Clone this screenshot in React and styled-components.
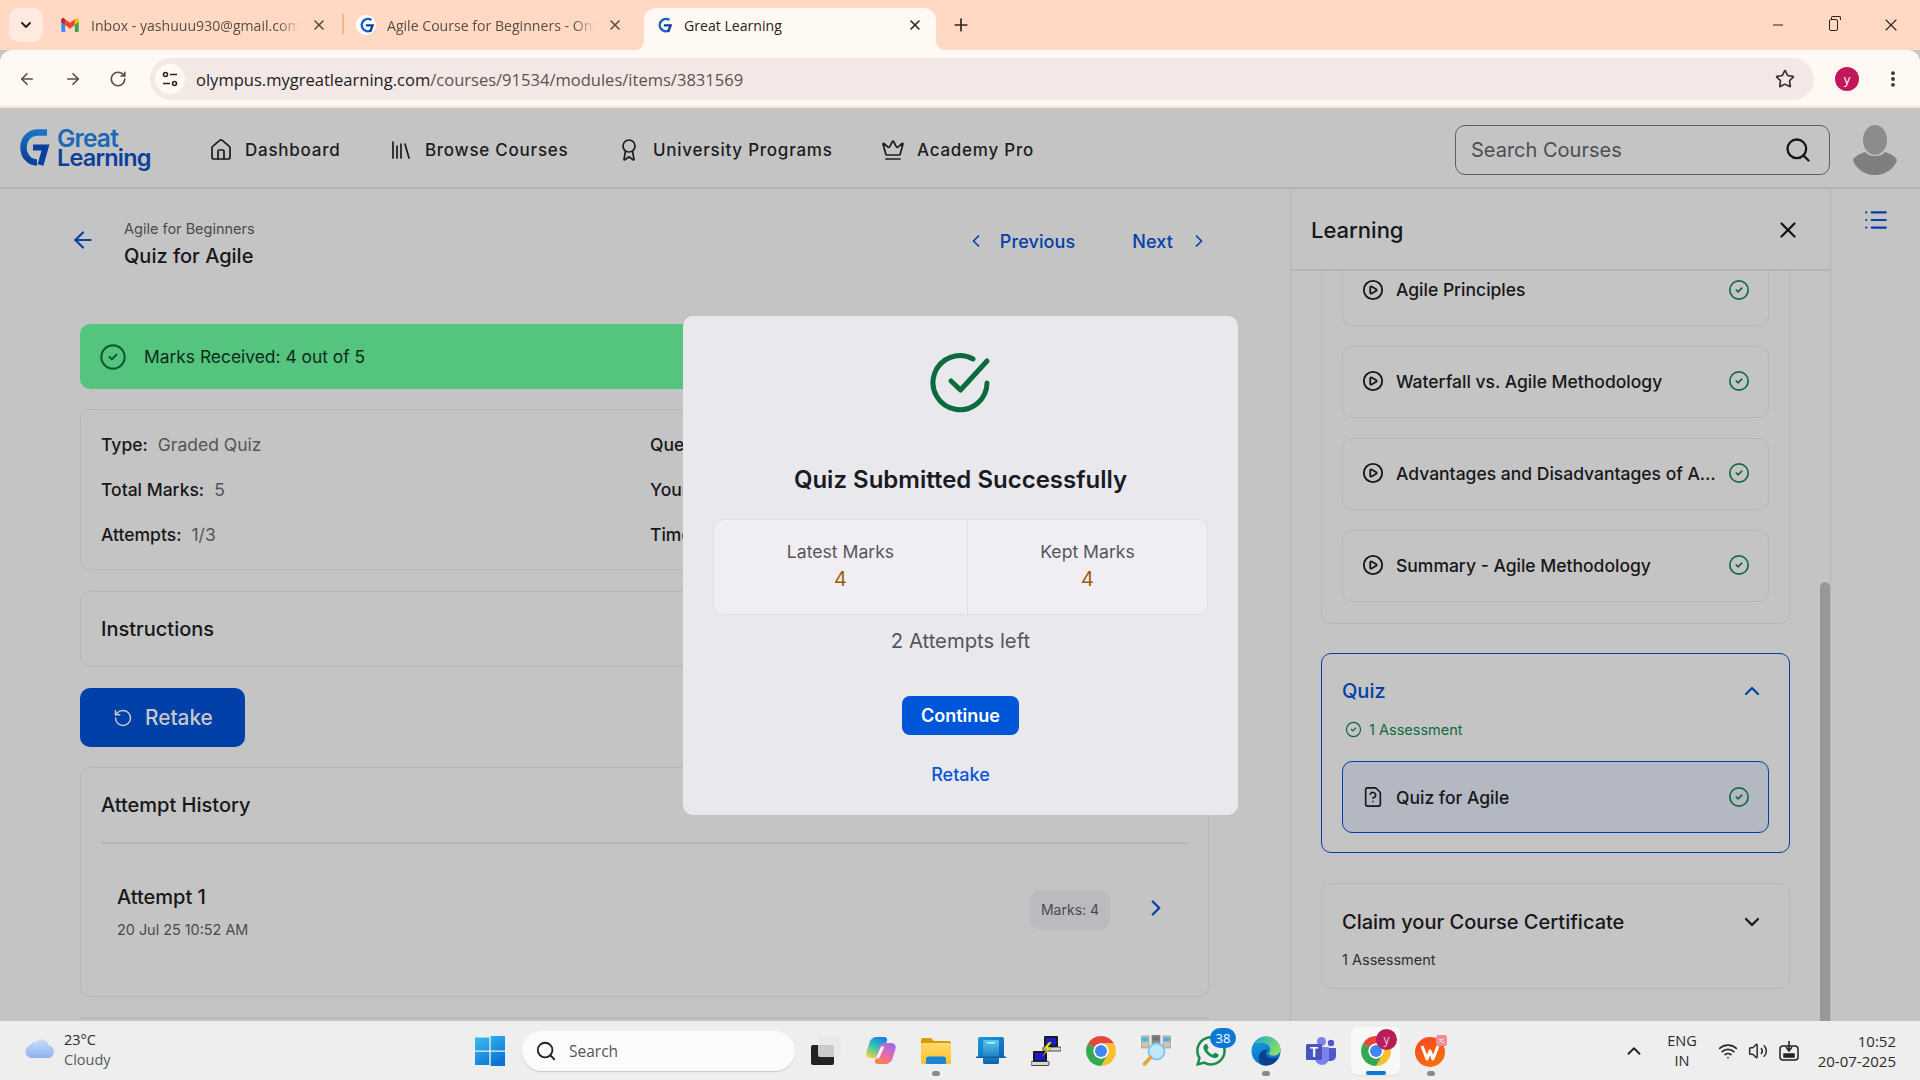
import React from 'react';
import styled, { createGlobalStyle } from 'styled-components';
import {
  ArrowLeft, ArrowRight, Award, ChevronDown, ChevronLeft, ChevronRight, ChevronUp, CircleCheck,
  CirclePlay, Crown, EllipsisVertical, FileQuestion, House, Library, List, Minus, Plus, RotateCcw, RotateCw,
  Search, Star, Volume2, Wifi, X,
} from 'lucide-react';
import { BsWhatsapp } from 'react-icons/bs';

const INTER = '"Inter", "Liberation Sans", sans-serif';
const SYSTEM = '"Open Sans", "Noto Sans", "Liberation Sans", sans-serif';

const GlobalStyle = createGlobalStyle`
  html, body { margin: 0; padding: 0; background: #c4c4c4; }
  * { box-sizing: border-box; }
`;

const Screen = styled.div`
  width: 1920px;
  height: 1080px;
  display: flex;
  flex-direction: column;
  overflow: hidden;
  font-family: ${INTER};
`;

/* ---------- browser frame ---------- */
const TabStrip = styled.div`
  height: 50px;
  flex: none;
  background: #ffd9c4;
  display: flex;
  align-items: flex-end;
  padding-left: 9px;
  font-family: ${SYSTEM};
`;

const TabMenu = styled.div`
  width: 34px;
  height: 34px;
  margin: 0 5px 8px 0;
  border-radius: 10px;
  background: #ffeadf;
  display: flex;
  align-items: center;
  justify-content: center;
  color: #2b2320;
`;

const Tab = styled.div`
  position: relative;
  width: ${p => (p.$active ? '292px' : '296px')};
  height: 42px;
  margin-left: ${p => (p.$active ? '4px' : '0')};
  padding: ${p => (p.$active ? '0 13px 8px 11px' : '0 17px 8px 13px')};
  display: flex;
  align-items: center;
  gap: ${p => (p.$active ? '11px' : '12px')};
  color: ${p => (p.$active ? '#2b2320' : '#5b4c44')};
  background: ${p => (p.$active ? '#fff8f3' : 'transparent')};
  border-radius: 12px 12px 0 0;
  ${p => p.$active && `
    &::before, &::after {
      content: '';
      position: absolute;
      bottom: 0;
      width: 10px;
      height: 10px;
    }
    &::before { left: -10px; background: radial-gradient(circle at 0 0, transparent 10px, #fff8f3 10.5px); }
    &::after { right: -10px; background: radial-gradient(circle at 100% 0, transparent 10px, #fff8f3 10.5px); }
  `}
`;

const TabDivider = styled.span`
  position: absolute;
  right: 0;
  top: 6px;
  width: 2px;
  height: 20px;
  background: #f2b48e;
`;

const FaviconDisc = styled.span`
  width: 20px;
  height: 20px;
  flex: none;
  margin: 0 -1px;
  border-radius: 50%;
  background: ${p => (p.$plain ? 'transparent' : '#fff')};
  display: flex;
  align-items: center;
  justify-content: center;
`;

const TabTitle = styled.span`
  flex: 1;
  min-width: 0;
  white-space: nowrap;
  overflow: hidden;
  font-size: 14.1px;
  ${p => p.$fade && 'mask-image: linear-gradient(to right, #000 90%, transparent 100%);'}
`;

const NewTab = styled.span`
  display: flex;
  margin: 0 0 15px 15px;
  color: #2b2320;
`;

const WindowButtons = styled.div`
  margin-left: auto;
  height: 100%;
  display: flex;
  align-items: center;
  color: #2b2320;
  padding: 0 19px 0 0;
  gap: 43px;
`;

const RestoreGlyph = styled.span`
  position: relative;
  width: 9px;
  height: 12px;
  border: 1.2px solid #2b2320;
  border-radius: 2px;
  &::after {
    content: '';
    position: absolute;
    top: -4px;
    left: 1px;
    width: 8px;
    height: 3px;
    border: 1.2px solid #2b2320;
    border-bottom: none;
    border-radius: 2px 2px 0 0;
  }
`;

const Toolbar = styled.div`
  height: 58px;
  flex: none;
  background: #fff8f3;
  border-radius: 12px 12px 0 0;
  border-bottom: 2px solid #fbe0d2;
  display: flex;
  align-items: center;
  padding: 2px 0 0 18px;
  color: #5b4c44;
  font-family: ${SYSTEM};
`;

const ToolButtons = styled.div`
  display: flex;
  gap: 27.5px;
  margin-right: 23px;
`;

const AddressBar = styled.div`
  width: 1664px;
  height: 42px;
  border-radius: 21px;
  background: #f3e8e6;
  display: flex;
  align-items: center;
  padding: 0 19px 0 5px;
`;

const SiteInfo = styled.span`
  width: 30px;
  height: 30px;
  border-radius: 50%;
  background: #fff8f3;
  display: flex;
  align-items: center;
  justify-content: center;
  margin-right: 11px;
`;

const Url = styled.span`
  flex: 1;
  font-size: 16.55px;
  color: #5f524c;
  b { font-weight: 400; color: #211c19; }
`;

const ProfileDot = styled.span`
  width: 24px;
  height: 24px;
  border-radius: 50%;
  background: #c2185b;
  color: #fff;
  font-size: 13px;
  display: flex;
  align-items: center;
  justify-content: center;
  margin-left: 21px;
`;

const MoreButton = styled.span`
  display: flex;
  margin-left: 24px;
  color: #3b302b;
`;

/* ---------- site header ---------- */
const SiteArea = styled.div`
  position: relative;
  flex: 1;
  min-height: 0;
  display: flex;
  flex-direction: column;
`;

const SiteHeader = styled.header`
  height: 81px;
  flex: none;
  background: #c4c4c4;
  border-bottom: 2px solid #b4b4b4;
  display: flex;
  align-items: center;
  padding: 4px 23px 0 20px;
`;

const Logo = styled.div`
  display: flex;
  align-items: center;
  width: 189px;
  gap: 7px;
  margin-top: -4px;
`;

const LogoText = styled.div`
  font-weight: 600;
  line-height: 20px;
  letter-spacing: -0.8px;
  span { display: block; }
`;

const LogoGreat = styled.span`
  color: #1a68b6;
  font-size: 24.5px;
`;

const LogoLearning = styled.span`
  color: #0b3f9c;
  font-size: 23.5px;
`;

const NavMenu = styled.nav`
  display: flex;
  gap: 48.5px;
`;

const NavLink = styled.a`
  display: flex;
  align-items: center;
  gap: 12px;
  font-size: 17px;
  font-weight: 500;
  letter-spacing: 0.75px;
  color: #1c1c1e;
`;

const SearchBox = styled.div`
  margin-left: auto;
  width: 375px;
  height: 50px;
  border: 1px solid #5f5f63;
  border-radius: 10px;
  display: flex;
  align-items: center;
  justify-content: space-between;
  padding: 0 17px 0 15px;
  font-size: 20px;
  color: #4d4d52;
`;

const SearchGlyph = styled(Search)`
  color: ${p => p.$tone};
`;

const UserAvatar = styled.svg`
  margin-left: 23px;
`;

/* ---------- page ---------- */
const PageBody = styled.div`
  flex: 1;
  min-height: 0;
  display: flex;
  background: #c4c4c4;
  overflow: hidden;
`;

const MainColumn = styled.main`
  width: 1291px;
  flex: none;
  padding: 25px 81px 0 80px;
  border-right: 1px solid #b4b4b4;
`;

const TopRow = styled.div`
  display: flex;
  align-items: center;
  height: 64px;
  margin-bottom: 46px;
`;

const BackLink = styled.span`
  display: flex;
  color: #0040a8;
  margin: -13px 28px 0 -10px;
`;

const Crumb = styled.div`
  font-size: 14.5px;
  line-height: 20px;
  color: #4a4a4f;
`;

const PageTitle = styled.div`
  font-size: 20px;
  line-height: 34px;
  font-weight: 500;
  color: #17171a;
`;

const Pager = styled.div`
  margin-left: auto;
  display: flex;
  gap: 57px;
  margin-top: -10px;
`;

const PagerLink = styled.span`
  display: flex;
  align-items: center;
  gap: ${p => p.$gap}px;
  font-size: 18px;
  letter-spacing: 0.1px;
  font-weight: 500;
  color: #0040a8;
`;

const ScoreBanner = styled.div`
  height: 65px;
  border-radius: 10px;
  background: #55c47f;
  display: flex;
  align-items: center;
  gap: 17px;
  padding-left: 19px;
  font-size: 17.4px;
  color: #0d2b1a;
  margin-bottom: 20px;
`;

const Card = styled.section`
  border: 1px solid #b8b8b8;
  border-radius: 10px;
  margin-bottom: 21px;
`;

const InfoCard = styled(Card)`
  height: 161px;
  padding: 12px 20px;
  display: grid;
  grid-template-columns: 549px 1fr;
  grid-auto-rows: 45px;
  align-items: center;
`;

const InfoItem = styled.div`
  font-size: 17.5px;
  color: #55555a;
  b { font-weight: 500; color: #17171a; margin-right: 10px; }
`;

const InstructionsCard = styled(Card)`
  height: 76px;
  display: flex;
  align-items: center;
  padding: 0 20px;
  font-size: 20px;
  font-weight: 500;
  color: #17171a;
`;

const RetakeButton = styled.button`
  width: 165px;
  height: 59px;
  border: none;
  border-radius: 10px;
  background: #0040a8;
  color: #c8c8c8;
  font: 500 20.8px ${INTER};
  display: flex;
  align-items: center;
  gap: 12px;
  padding: 0 0 0 33px;
  margin-bottom: 20px;
`;

const HistoryCard = styled(Card)`
  height: 230px;
  margin-bottom: 20px;
  padding: 0 20px;
`;

const HistoryTitle = styled.div`
  height: 76px;
  border-bottom: 2px solid #b8b8b8;
  display: flex;
  align-items: center;
  font-size: 20px;
  font-weight: 500;
  color: #17171a;
`;

const AttemptRow = styled.div`
  display: flex;
  align-items: center;
  padding: 39px 19px 0 16px;
`;

const AttemptName = styled.div`
  font-size: 20px;
  line-height: 28px;
  font-weight: 500;
  color: #17171a;
`;

const AttemptDate = styled.div`
  margin-top: 9px;
  font-size: 14.4px;
  line-height: 20px;
  color: #4a4a4f;
`;

const MarksPill = styled.span`
  margin-left: auto;
  width: 80px;
  height: 40px;
  border-radius: 10px;
  background: #bbbbbf;
  font-size: 14px;
  color: #4a4a4f;
  display: flex;
  align-items: center;
  justify-content: center;
  margin-right: 33px;
  margin-top: -4px;
`;

const AttemptChevron = styled.span`
  display: flex;
  color: #0040a8;
  margin-top: -8px;
`;

/* ---------- learning panel ---------- */
const LearningPanel = styled.aside`
  width: 540px;
  flex: none;
  display: flex;
  flex-direction: column;
  border-right: 1px solid #b4b4b4;
  min-height: 0;
`;

const PanelHeader = styled.div`
  height: 82px;
  flex: none;
  border-bottom: 2px solid #b4b4b4;
  display: flex;
  align-items: center;
  justify-content: space-between;
  padding: 2px 29px 0 20px;
  font-size: 22px;
  font-weight: 500;
  color: #17171a;
`;

const PanelScroller = styled.div`
  position: relative;
  flex: 1;
  min-height: 0;
  padding-right: 40px;
  padding-left: 30px;
  overflow: hidden;
`;

const ScrollThumb = styled.div`
  position: absolute;
  right: 0;
  top: 311px;
  bottom: 0;
  width: 10px;
  border-radius: 5px 5px 0 0;
  background: #989898;
`;

const LessonSection = styled.div`
  border: 1px solid #b8b8b8;
  border-top: none;
  border-radius: 0 0 10px 10px;
  padding: 0 20px 21px;
  display: flex;
  flex-direction: column;
  gap: 20px;
  margin-bottom: 29px;
`;

const Lesson = styled.div`
  height: ${p => (p.$clipped ? '55px' : '72px')};
  border: 1px solid ${p => (p.$current ? '#0040a8' : '#b8b8b8')};
  ${p => p.$clipped && 'border-top: none;'}
  border-radius: ${p => (p.$clipped ? '0 0 10px 10px' : '10px')};
  background: ${p => (p.$current ? '#b3b8c2' : 'transparent')};
  display: flex;
  align-items: center;
  gap: 12px;
  padding: 0 18px ${p => (p.$clipped ? '17px' : p.$current ? '0' : '2px')} 19px;
  font-size: 18px;
  color: #17171a;
`;

const LessonName = styled.span`
  flex: 1;
  min-width: 0;
  margin-right: -3px;
  white-space: nowrap;
  overflow: hidden;
  text-overflow: ellipsis;
  font-weight: 500;
  font-size: 17.5px;
`;

const DoneIcon = styled(CircleCheck)`
  flex: none;
  color: #0c6b3e;
`;

const QuizSection = styled.div`
  height: 200px;
  border: 1px solid #0040a8;
  border-radius: 10px;
  padding: 21px 20px 20px;
  margin-bottom: 30px;
`;

const SectionHead = styled.div`
  display: flex;
  align-items: center;
  justify-content: space-between;
  height: 32px;
  font-size: 20px;
  font-weight: 500;
  color: ${p => (p.$active ? '#0040a8' : '#17171a')};
  padding-right: 5px;
`;

const SectionMeta = styled.div`
  display: flex;
  align-items: center;
  gap: 7px;
  margin: ${p => (p.$done ? '12px 0 22px 3px' : '11px 0 0')};
  height: 20px;
  font-size: 14.5px;
  color: ${p => (p.$done ? '#0c6b3e' : '#2f2f33')};
`;

const CertificateSection = styled.div`
  height: 106px;
  border: 1px solid #b8b8b8;
  border-radius: 10px;
  padding: 22px 20px;
`;

const IconRail = styled.div`
  flex: 1;
  display: flex;
  justify-content: center;
  padding: 18px 0 0 1px;
  color: #0040a8;
  height: 30px;
`;

/* ---------- result dialog ---------- */
const Overlay = styled.div`
  position: absolute;
  inset: 0;
  display: flex;
  align-items: center;
  justify-content: center;
`;

const Dialog = styled.div`
  width: 555px;
  height: 499px;
  margin: 2px 0 0 1px;
  border-radius: 10px;
  background: #e9e8ed;
  padding: 35px 30px 0;
  display: flex;
  flex-direction: column;
  align-items: center;
`;

const DialogTitle = styled.div`
  margin-top: 47px;
  height: 36px;
  line-height: 36px;
  font-size: 24px;
  font-weight: 600;
  color: #1b1b1f;
`;

const MarksGrid = styled.div`
  margin-top: 21px;
  width: 495px;
  height: 96px;
  flex: none;
  display: grid;
  grid-template-columns: 253px 1fr;
  background: #f0eef3;
  border: 1px solid #e0dfe4;
  border-radius: 10px;
`;

const MarksCell = styled.div`
  padding-top: 21px;
  text-align: center;
  font-size: 17.6px;
  line-height: 22px;
  color: #55555c;
  & + & { border-left: 1px solid #e0dfe4; }
`;

const MarksValue = styled.div`
  font-size: 20px;
  line-height: 32px;
  color: #a05a0a;
`;

const AttemptsLeft = styled.div`
  margin-top: 13px;
  font-size: 20.3px;
  line-height: 26px;
  color: #55555c;
`;

const ContinueButton = styled.button`
  margin-top: 42px;
  width: 117px;
  height: 39px;
  flex: none;
  border: none;
  border-radius: 8px;
  background: #0056d8;
  color: #fff;
  font: 600 18px ${INTER};
`;

const RetakeLink = styled.a`
  margin-top: 29px;
  font-size: 18px;
  line-height: 22px;
  font-weight: 500;
  color: #0a56d6;
`;

/* ---------- windows taskbar ---------- */
const Taskbar = styled.footer`
  height: 59px;
  flex: none;
  background: #eeeeee;
  display: flex;
  align-items: center;
  font-family: ${SYSTEM};
  color: #2b2b2b;
`;

const Weather = styled.div`
  width: 475px;
  padding: 0 0 2px 24px;
  display: flex;
  align-items: center;
  gap: 8px;
`;

const TwoLines = styled.div`
  font-size: ${p => p.$size || 14.5}px;
  line-height: 20px;
  text-align: ${p => p.$align || 'left'};
  span { display: block; }
  span + span { color: ${p => (p.$muted ? '#5a5a5a' : 'inherit')}; }
`;

const TaskSearch = styled.div`
  width: 273px;
  height: 40px;
  margin-left: 17px;
  border-radius: 20px;
  background: #fbfbfb;
  box-shadow: 0 1px 1px #c9c9c9;
  display: flex;
  align-items: center;
  gap: 12px;
  padding-left: 13px;
  font-size: 15.5px;
  color: #555;
`;

const TaskIcons = styled.div`
  display: flex;
  margin-left: 3px;
`;

const TaskIcon = styled.div`
  position: relative;
  width: 55px;
  height: 48px;
  display: flex;
  align-items: center;
  justify-content: center;
  border-radius: 6px;
  ${p => p.$active && 'background: #f8f8f8; width: 49px; margin: 0 3px; box-shadow: 0 1px 1px #dcdcdc;'}
`;

const RunDot = styled.span`
  position: absolute;
  left: 50%;
  bottom: ${p => (p.$active ? '0' : '-1px')};
  transform: translateX(-50%);
  width: ${p => (p.$active ? '20px' : '8px')};
  height: ${p => (p.$active ? '4px' : '5px')};
  border-radius: 4px;
  background: ${p => (p.$active ? '#0a78d4' : '#8a8a8a')};
`;

const CountBadge = styled.span`
  position: absolute;
  top: 1px;
  right: 2px;
  width: 26px;
  height: 20px;
  border-radius: 10px;
  background: #0a78d4;
  color: #fff;
  font-size: 13px;
  display: flex;
  align-items: center;
  justify-content: center;
`;

const ProfileBadge = styled.span`
  position: absolute;
  top: 2px;
  right: 3px;
  width: 21px;
  height: 21px;
  border-radius: 50%;
  background: #b81d5c;
  color: #f3c6d6;
  font-size: 12px;
  display: flex;
  align-items: center;
  justify-content: center;
`;

const Tray = styled.div`
  margin-left: auto;
  display: flex;
  align-items: center;
  padding-right: 24px;
`;

const TrayLang = styled(TwoLines)`
  margin-left: 22px;
`;

const TrayIcons = styled.div`
  display: flex;
  align-items: center;
  gap: 10px;
  margin: 0 18px 0 21px;
`;

const CloudSvg = styled.svg`
  margin: 0 0 4px 1px;
`;

/* ---------- drawn icons ---------- */
const GMark = () => (
  <svg width="15" height="16" viewBox="0 0 24 26" fill="none">
    <path d="M20 5A10 10 0 1 0 19 22" stroke="#1a5fc4" strokeWidth="4" />
    <path d="M11 13.500H22L18 24" stroke="#0f3f9e" strokeWidth="3.800" />
  </svg>
);

const GmailIcon = () => (
  <svg width="18" height="14" viewBox="0 0 20 16">
    <path d="M0 3v11.5C0 15.3.7 16 1.5 16H4.500V7.500Z" fill="#4285f4" />
    <path d="M20 3v11.5c0 .8-.7 1.500-1.500 1.500H15.500V7.500Z" fill="#34a853" />
    <path d="M4.500 8 0 4.500V2.200C0 .4 2 -.6 3.400.5L4.500 1.300Z" fill="#c5221f" />
    <path d="M4.500 8V1.300L10 5.500l5.500-4.200V8L10 12.200Z" fill="#ea4335" />
    <path d="M15.500 8 20 4.500V2.200C20 .4 18 -.6 16.600.5L15.500 1.300Z" fill="#fbbc04" />
  </svg>
);

const TuneIcon = () => (
  <svg width="18" height="18" viewBox="0 0 18 18" fill="none" stroke="#2b2320" strokeWidth="1.600">
    <circle cx="4.500" cy="4.500" r="2" />
    <path d="M9 4.500h7M2 13.500h7" />
    <circle cx="13.500" cy="13.500" r="2" />
  </svg>
);

const BrandMark = () => (
  <svg width="30" height="37" viewBox="0 0 30 37" fill="none">
    <defs>
      <linearGradient id="brandArc" x1="0.6" y1="0" x2="0.4" y2="1">
        <stop offset="0" stopColor="#1a74c4" />
        <stop offset="1" stopColor="#0b3f9c" />
      </linearGradient>
    </defs>
    <path d="M27 3.500H18C9.500 3.500 3.500 10 3.500 18.500S9.500 33.500 17 33.500" stroke="url(#brandArc)" strokeWidth="6.500" />
    <path d="M13 18.500H25.500L20.500 36" stroke="#0b3f9c" strokeWidth="6" />
  </svg>
);

const BigCheck = () => (
  <svg width="64" height="64" viewBox="0 0 64 64" fill="none" stroke="#0b6b3e" strokeWidth="5" strokeLinecap="round" strokeLinejoin="round">
    <path d="M58 32a27 27 0 1 1-14-24" />
    <path d="M22 30l9.500 9L58 10" />
  </svg>
);

const CloudIcon = () => (
  <CloudSvg width="31" height="21" viewBox="0 0 31 21">
    <defs>
      <linearGradient id="cloudFill" x1="0" y1="0" x2="0" y2="1">
        <stop offset="0" stopColor="#c9dcfa" />
        <stop offset="1" stopColor="#8db4ee" />
      </linearGradient>
    </defs>
    <path d="M7 21a6.500 6.500 0 0 1-2-12.700A6 6 0 0 1 11 5.200a7 7 0 0 1 12.500 2.800A6.700 6.700 0 0 1 24 21Z" fill="url(#cloudFill)" />
  </CloudSvg>
);

const StartIcon = () => (
  <svg width="30" height="30" viewBox="0 0 30 30">
    <defs>
      <linearGradient id="winFill" x1="0" y1="0" x2="0.6" y2="1">
        <stop offset="0" stopColor="#3ac0f5" />
        <stop offset="1" stopColor="#0a74d2" />
      </linearGradient>
    </defs>
    <path d="M0 1.500h14.300v13H0ZM15.700 0H30v14.500H15.700ZM0 15.700h14.300V29H0ZM15.700 15.700H30V30H15.700Z" fill="url(#winFill)" />
  </svg>
);

const TaskViewIcon = () => (
  <svg width="30" height="28" viewBox="0 0 30 28">
    <rect x="0" y="8" width="23" height="20" rx="2" fill="#222" />
    <rect x="7" y="0" width="23" height="20" rx="2" fill="#e8e8e8" fillOpacity="0.85" />
  </svg>
);

const CopilotIcon = () => (
  <svg width="30" height="27" viewBox="0 0 30 27">
    <defs>
      <linearGradient id="copLeft" x1="0.7" y1="0" x2="0.2" y2="1">
        <stop offset="0" stopColor="#1a7fe8" />
        <stop offset="0.5" stopColor="#35c7b0" />
        <stop offset="1" stopColor="#f5d33a" />
      </linearGradient>
      <linearGradient id="copRight" x1="0.8" y1="0" x2="0.2" y2="1">
        <stop offset="0" stopColor="#9a6cf0" />
        <stop offset="0.6" stopColor="#f06a9c" />
        <stop offset="1" stopColor="#f8873a" />
      </linearGradient>
    </defs>
    <path d="M11 0h7c2.500 0 3.500 1.500 3 3.500L16.500 17c-1 2.500-2.500 4-5.500 4H5c-3.500 0-5.500-2.500-4.500-6l3-9.500C4.500 2 7.500 0 11 0Z" fill="url(#copLeft)" />
    <path d="M19 6h6c3.500 0 5.500 2.500 4.500 6l-3 9.500C25.500 25 22.500 27 19 27h-7c-2.500 0-3.500-1.500-3-3.500L13.500 10c1-2.500 2.500-4 5.500-4Z" fill="url(#copRight)" />
    <path d="M15 9.500h3.500L13 21.500H9.500Z" fill="#f6eefc" />
  </svg>
);

const FolderIcon = () => (
  <svg width="30" height="26" viewBox="0 0 30 26">
    <defs>
      <linearGradient id="folderFill" x1="0" y1="0" x2="0" y2="1">
        <stop offset="0" stopColor="#ffd968" />
        <stop offset="1" stopColor="#fbc02d" />
      </linearGradient>
    </defs>
    <path d="M0 2a2 2 0 0 1 2-2h8l3 3h15a2 2 0 0 1 2 2v4H0Z" fill="#d99a0f" />
    <rect y="5" width="30" height="21" rx="1" fill="url(#folderFill)" />
    <path d="M5 26v-5a2.500 2.500 0 0 1 2.500-2.500h15A2.500 2.500 0 0 1 25 21v5Z" fill="#1c85d8" />
  </svg>
);

const StoreIcon = () => (
  <svg width="30" height="27" viewBox="0 0 30 27">
    <defs>
      <linearGradient id="storeBack" x1="0" y1="0" x2="1" y2="1">
        <stop offset="0" stopColor="#1f9be0" />
        <stop offset="1" stopColor="#0b62ad" />
      </linearGradient>
      <linearGradient id="storeFront" x1="0" y1="0" x2="0" y2="1">
        <stop offset="0" stopColor="#56c9f0" />
        <stop offset="1" stopColor="#0a62ad" />
      </linearGradient>
    </defs>
    <path d="M4 0h22a2 2 0 0 1 2 2v18H2V2a2 2 0 0 1 2-2Z" fill="url(#storeBack)" />
    <rect x="7" y="3" width="16" height="24" rx="1.500" fill="url(#storeFront)" />
    <rect x="11" y="5" width="8" height="1.500" fill="#c5f0fd" />
    <rect x="0" y="19.500" width="30" height="1.500" fill="#0f5fa8" />
  </svg>
);

const NetworkIcon = () => (
  <svg width="30" height="30" viewBox="0 0 30 30">
    <rect x="13" y="0" width="14" height="11" rx="1" fill="#1c1c1c" />
    <rect x="15" y="2" width="10" height="7" fill="#1c1cc8" />
    <rect x="12" y="11" width="18" height="4" rx="1" fill="#d8d8d8" stroke="#222" strokeWidth="0.800" />
    <rect x="2" y="15" width="14" height="11" rx="1" fill="#1c1c1c" />
    <rect x="4" y="17" width="10" height="7" fill="#1c1cc8" />
    <rect x="0" y="25.500" width="18" height="4" rx="1" fill="#d8d8d8" stroke="#222" strokeWidth="0.800" />
    <path d="M18 6l-6 7h4l-5 8 10-10h-4l4-5Z" fill="#f5e020" stroke="#333" strokeWidth="0.400" />
  </svg>
);

const ChromeIcon = () => (
  <svg width="30" height="30" viewBox="4 4 40 40">
    <path d="M24 4A20 20 0 0 1 41.320 14H24a10 10 0 0 0-8.660 5L6.680 14A20 20 0 0 1 24 4Z" fill="#e8453c" />
    <path d="M41.320 14A20 20 0 0 1 24 44l8.660-15A10 10 0 0 0 24 14Z" fill="#fbc02d" />
    <path d="M24 44A20 20 0 0 1 6.680 14l8.660 5A10 10 0 0 0 32.660 29Z" fill="#34a853" />
    <circle cx="24" cy="24" r="10" fill="#fff" />
    <circle cx="24" cy="24" r="8" fill="#4285f4" />
  </svg>
);

const FinderIcon = () => (
  <svg width="30" height="31" viewBox="0 0 30 31">
    <rect x="0" y="1" width="8" height="12" fill="#c9c5b4" stroke="#8e8873" strokeWidth="0.600" />
    <rect x="11" y="0" width="8" height="12" fill="#8d8f8a" stroke="#6e6c60" strokeWidth="0.600" />
    <rect x="22" y="1" width="8" height="12" fill="#c9c5b4" stroke="#8e8873" strokeWidth="0.600" />
    <rect x="1" y="2.500" width="6" height="4" fill="#3fb4e6" />
    <rect x="12" y="1.500" width="6" height="4" fill="#6e7276" />
    <rect x="23" y="2.500" width="6" height="4" fill="#3fb4e6" />
    <circle cx="15.500" cy="16.500" r="8" fill="#bfe8fa" stroke="#7ec8ec" strokeWidth="2" />
    <path d="M9.500 22.500L3.500 29" stroke="#e0a63a" strokeWidth="3.500" strokeLinecap="round" />
  </svg>
);

const EdgeIcon = () => (
  <svg width="30" height="30" viewBox="0 0 32 32">
    <defs>
      <linearGradient id="edgeBlue" x1="0" y1="0" x2="0.4" y2="1">
        <stop offset="0" stopColor="#14a3e0" />
        <stop offset="1" stopColor="#0a6cc4" />
      </linearGradient>
      <linearGradient id="edgeGreen" x1="0" y1="0" x2="1" y2="0.6">
        <stop offset="0" stopColor="#1fa8c9" />
        <stop offset="1" stopColor="#86e06a" />
      </linearGradient>
    </defs>
    <circle cx="16" cy="16" r="15.500" fill="url(#edgeBlue)" />
    <path d="M3 8C6 3 11 .5 16 .5c9 0 15.500 7 15.500 14 0 4-3.500 6.500-7.500 6.500-3 0-5-1-5-2.500 0-1 1.500-1.500 1.500-4.500 0-4-4-6.500-8.500-6.500C8 7.500 5 8 3 8Z" fill="url(#edgeGreen)" />
    <path d="M12 31C7 27 7 19 12 16c2-1.200 4-1.500 6-1 -1.500 1-2.500 2.500-2 4.500 .8 3 5 4.500 9 4 1.500-.2 3-.6 4-1.500C27 28 22 31.500 16 31.500c-1.500 0-3-.2-4-.5Z" fill="#0b3f8f" />
  </svg>
);

const TeamsIcon = () => (
  <svg width="30" height="28" viewBox="0 0 30 28" fontFamily={INTER}>
    <circle cx="15.500" cy="4.500" r="4.500" fill="#7b83eb" />
    <circle cx="25" cy="6" r="3.200" fill="#5059c9" />
    <path d="M21 11h8a1 1 0 0 1 1 1v7a5 5 0 0 1-5 5h-4Z" fill="#5059c9" />
    <path d="M9 10h13a1 1 0 0 1 1 1v10a7 7 0 0 1-14 0Z" fill="#7b83eb" />
    <rect x="0" y="7" width="16" height="16" rx="1.500" fill="#4b53bc" />
    <text x="8" y="20" textAnchor="middle" fontSize="13" fontWeight="700" fill="#fff">T</text>
  </svg>
);

const WpsIcon = () => (
  <svg width="32" height="32" viewBox="0 0 32 32">
    <defs>
      <linearGradient id="wpsFill" x1="0.2" y1="0" x2="0.7" y2="1">
        <stop offset="0" stopColor="#f8481f" />
        <stop offset="1" stopColor="#f5720f" />
      </linearGradient>
    </defs>
    <circle cx="15" cy="17" r="15" fill="url(#wpsFill)" />
    <path d="M7 11l5 13 3-8 3 8 5-13" fill="none" stroke="#fff" strokeWidth="3" strokeLinejoin="round" />
    <rect x="21" y="0" width="11" height="11" rx="2.500" fill="#f28a94" />
    <path d="M24.500 7.500l4-4M24 4.500h2M27 7.500h2" stroke="#fff" strokeWidth="1" />
  </svg>
);

const BatteryIcon = () => (
  <svg width="22" height="22" viewBox="0 0 22 22" fill="none" stroke="#222" strokeWidth="1.500">
    <rect x="2" y="6" width="18" height="14" rx="3" />
    <path d="M11 1v9M8 7l3 4 3-4" />
    <path d="M6 14h10v3H6Z" fill="#222" />
  </svg>
);

const lessons = [
  { name: 'Agile Principles', clipped: true },
  { name: 'Waterfall vs. Agile Methodology' },
  { name: 'Advantages and Disadvantages of Agile Methodology' },
  { name: 'Summary - Agile Methodology' },
];

const navLinks = [
  { label: 'Dashboard', Icon: House },
  { label: 'Browse Courses', Icon: Library },
  { label: 'University Programs', Icon: Award },
  { label: 'Academy Pro', Icon: Crown },
];

const App = () => {
  return (
    <Screen>
      <GlobalStyle />
      <TabStrip>
        <TabMenu><ChevronDown size={16} strokeWidth={3} /></TabMenu>
        <Tab>
          <GmailIcon />
          <TabTitle $fade>Inbox - yashuuu930@gmail.com</TabTitle>
          <X size={16} strokeWidth={2.4} />
          <TabDivider />
        </Tab>
        <Tab>
          <FaviconDisc><GMark /></FaviconDisc>
          <TabTitle $fade>Agile Course for Beginners - Online</TabTitle>
          <X size={16} strokeWidth={2.4} />
        </Tab>
        <Tab $active>
          <FaviconDisc $plain><GMark /></FaviconDisc>
          <TabTitle>Great Learning</TabTitle>
          <X size={16} strokeWidth={2.4} />
        </Tab>
        <NewTab><Plus size={20} /></NewTab>
        <WindowButtons>
          <Minus size={16} strokeWidth={1.5} />
          <RestoreGlyph />
          <X size={20} strokeWidth={1.3} />
        </WindowButtons>
      </TabStrip>

      <Toolbar>
        <ToolButtons>
          <ArrowLeft size={18} strokeWidth={2.2} />
          <ArrowRight size={18} strokeWidth={2.2} />
          <RotateCw size={18} strokeWidth={2.2} />
        </ToolButtons>
        <AddressBar>
          <SiteInfo><TuneIcon /></SiteInfo>
          <Url><b>olympus.mygreatlearning.com</b>/courses/91534/modules/items/3831569</Url>
          <Star size={20} strokeWidth={2} color="#3b302b" />
        </AddressBar>
        <ProfileDot>y</ProfileDot>
        <MoreButton><EllipsisVertical size={20} strokeWidth={2.6} /></MoreButton>
      </Toolbar>

      <SiteArea>
        <SiteHeader>
          <Logo>
            <BrandMark />
            <LogoText>
              <LogoGreat>Great</LogoGreat>
              <LogoLearning>Learning</LogoLearning>
            </LogoText>
          </Logo>
          <NavMenu>
            {navLinks.map(({ label, Icon }) => (
              <NavLink key={label}>
                <Icon size={24} strokeWidth={1.7} />
                {label}
              </NavLink>
            ))}
          </NavMenu>
          <SearchBox>
            Search Courses
            <SearchGlyph size={28} strokeWidth={2} $tone="#17171a" />
          </SearchBox>
          <UserAvatar width="44" height="50" viewBox="0 0 44 50">
            <ellipse cx="22" cy="15" rx="12" ry="15" fill="#8c8c8c" />
            <path d="M12 27C6 29 1 32 0 35c2 7 10 15 22 15s20-8 22-15c-1-3-6-6-12-8-3 3-6 4-10 4s-7-1-10-4Z" fill="#7f7f7f" />
          </UserAvatar>
        </SiteHeader>

        <PageBody>
          <MainColumn>
            <TopRow>
              <BackLink><ArrowLeft size={26} strokeWidth={2} /></BackLink>
              <div>
                <Crumb>Agile for Beginners</Crumb>
                <PageTitle>Quiz for Agile</PageTitle>
              </div>
              <Pager>
                <PagerLink $gap={14}><ChevronLeft size={20} />Previous</PagerLink>
                <PagerLink $gap={16}>Next<ChevronRight size={20} /></PagerLink>
              </Pager>
            </TopRow>

            <ScoreBanner>
              <CircleCheck size={28} strokeWidth={1.8} color="#0d5a35" />
              Marks Received: 4 out of 5
            </ScoreBanner>

            <InfoCard>
              <InfoItem><b>Type:</b>Graded Quiz</InfoItem>
              <InfoItem><b>Questions:</b>5</InfoItem>
              <InfoItem><b>Total Marks:</b>5</InfoItem>
              <InfoItem><b>Your Marks:</b>4</InfoItem>
              <InfoItem><b>Attempts:</b>1/3</InfoItem>
              <InfoItem><b>Time Limit:</b>None</InfoItem>
            </InfoCard>

            <InstructionsCard>Instructions</InstructionsCard>

            <RetakeButton><RotateCcw size={20} strokeWidth={1.8} />Retake</RetakeButton>

            <HistoryCard>
              <HistoryTitle>Attempt History</HistoryTitle>
              <AttemptRow>
                <div>
                  <AttemptName>Attempt 1</AttemptName>
                  <AttemptDate>20 Jul 25 10:52 AM</AttemptDate>
                </div>
                <MarksPill>Marks: 4</MarksPill>
                <AttemptChevron><ChevronRight size={26} strokeWidth={2.2} /></AttemptChevron>
              </AttemptRow>
            </HistoryCard>
            <Card />
          </MainColumn>

          <LearningPanel>
            <PanelHeader>
              Learning
              <X size={26} strokeWidth={2.2} />
            </PanelHeader>
            <PanelScroller>
              <LessonSection>
                {lessons.map(lesson => (
                  <Lesson key={lesson.name} $clipped={lesson.clipped}>
                    <CirclePlay size={22} strokeWidth={2} />
                    <LessonName>{lesson.name}</LessonName>
                    <DoneIcon size={22} strokeWidth={1.8} />
                  </Lesson>
                ))}
              </LessonSection>

              <QuizSection>
                <SectionHead $active>
                  Quiz
                  <ChevronUp size={24} strokeWidth={2.2} />
                </SectionHead>
                <SectionMeta $done>
                  <CircleCheck size={17} strokeWidth={1.8} />
                  1 Assessment
                </SectionMeta>
                <Lesson $current>
                  <FileQuestion size={22} strokeWidth={1.8} />
                  <LessonName>Quiz for Agile</LessonName>
                  <DoneIcon size={22} strokeWidth={1.8} />
                </Lesson>
              </QuizSection>

              <CertificateSection>
                <SectionHead>
                  Claim your Course Certificate
                  <ChevronDown size={24} strokeWidth={2.2} />
                </SectionHead>
                <SectionMeta>1 Assessment</SectionMeta>
              </CertificateSection>
              <ScrollThumb />
            </PanelScroller>
          </LearningPanel>

          <IconRail><List size={26} strokeWidth={2} /></IconRail>
        </PageBody>

        <Overlay>
          <Dialog>
            <BigCheck />
            <DialogTitle>Quiz Submitted Successfully</DialogTitle>
            <MarksGrid>
              <MarksCell>Latest Marks<MarksValue>4</MarksValue></MarksCell>
              <MarksCell>Kept Marks<MarksValue>4</MarksValue></MarksCell>
            </MarksGrid>
            <AttemptsLeft>2 Attempts left</AttemptsLeft>
            <ContinueButton>Continue</ContinueButton>
            <RetakeLink>Retake</RetakeLink>
          </Dialog>
        </Overlay>
      </SiteArea>

      <Taskbar>
        <Weather>
          <CloudIcon />
          <TwoLines $muted><span>23°C</span><span>Cloudy</span></TwoLines>
        </Weather>
        <StartIcon />
        <TaskSearch>
          <SearchGlyph size={22} strokeWidth={2} $tone="#222" />
          Search
        </TaskSearch>
        <TaskIcons>
          <TaskIcon><TaskViewIcon /></TaskIcon>
          <TaskIcon><CopilotIcon /></TaskIcon>
          <TaskIcon><FolderIcon /><RunDot /></TaskIcon>
          <TaskIcon><StoreIcon /></TaskIcon>
          <TaskIcon><NetworkIcon /></TaskIcon>
          <TaskIcon><ChromeIcon /></TaskIcon>
          <TaskIcon><FinderIcon /></TaskIcon>
          <TaskIcon><BsWhatsapp size={30} color="#1c8c4c" /><CountBadge>38</CountBadge></TaskIcon>
          <TaskIcon><EdgeIcon /><RunDot /></TaskIcon>
          <TaskIcon><TeamsIcon /></TaskIcon>
          <TaskIcon $active>
            <ChromeIcon />
            <ProfileBadge>y</ProfileBadge>
            <RunDot $active />
          </TaskIcon>
          <TaskIcon><WpsIcon /><RunDot /></TaskIcon>
        </TaskIcons>
        <Tray>
          <ChevronUp size={22} strokeWidth={2} color="#222" />
          <TrayLang $align="center"><span>ENG</span><span>IN</span></TrayLang>
          <TrayIcons>
            <Wifi size={20} strokeWidth={2} />
            <Volume2 size={20} strokeWidth={1.8} />
            <BatteryIcon />
          </TrayIcons>
          <TwoLines $align="right" $size={15}><span>10:52</span><span>20-07-2025</span></TwoLines>
        </Tray>
      </Taskbar>
    </Screen>
  );
};

export default App;
